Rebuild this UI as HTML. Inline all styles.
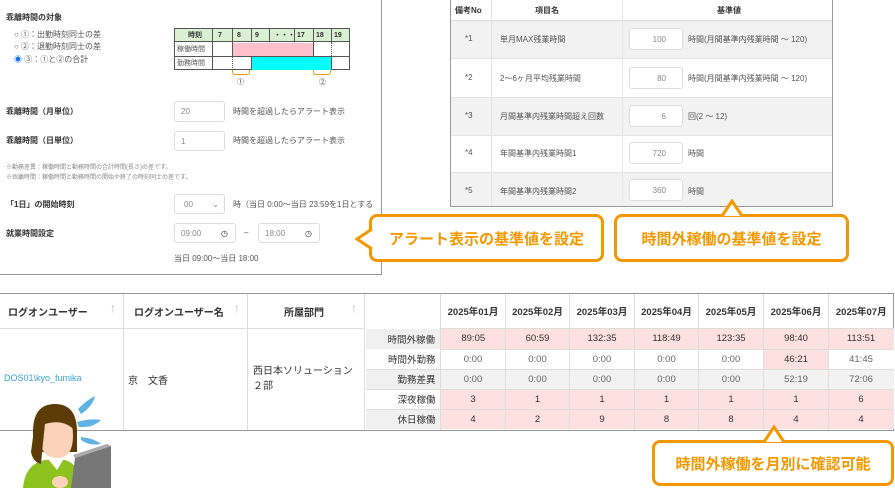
<!DOCTYPE html>
<html><head><meta charset="utf-8"><style>
*{margin:0;padding:0;box-sizing:border-box}
body{width:895px;height:488px;background:#fff;position:relative;overflow:hidden;font-family:"Liberation Sans","Noto Sans CJK JP",sans-serif;color:#333}
.a{position:absolute;white-space:nowrap}
.inp{position:absolute;border:1px solid #ddd;border-radius:3px;background:#fff;font-size:8px;color:#888;padding-left:6px;display:flex;align-items:center}
.s8{font-size:8px}
.b{font-weight:bold}
.call{position:absolute;border:3px solid #f39800;border-radius:8px;background:#fff;color:#f39800;font-weight:bold;font-size:15px;display:flex;align-items:center;justify-content:center}
table{border-collapse:collapse}
</style></head><body>

<!-- Left panel -->
<div class="a" style="left:0;top:0;width:382px;height:275px;border:1px solid #999;border-top:none;border-left:none"></div>
<div class="a s8 b" style="left:6px;top:12px">乖離時間の対象</div>
<div class="a s8" style="left:14px;top:29px;color:#555">○ ①：出勤時刻同士の差</div>
<div class="a s8" style="left:14px;top:41px;color:#555">○ ②：退勤時刻同士の差</div>
<div class="a s8" style="left:14px;top:54px;color:#555"><span style="color:#1a73e8">◉</span> ③：①と②の合計</div>

<div class="a" style="left:174px;top:28px;width:176px;height:42px;border:1px solid #555"></div>
<div class="a" style="left:175px;top:29px;width:174px;height:13px;background:#d9f0d3;border-bottom:1px solid #555"></div>
<div class="a" style="left:232px;top:43px;width:81px;height:13px;background:#ffc0cb"></div>
<div class="a" style="left:251px;top:57px;width:80px;height:13px;background:#00ffff"></div>
<div class="a" style="left:175px;top:56px;width:174px;border-top:1px solid #555"></div>
<div class="a" style="left:212px;top:28px;height:42px;border-left:1px solid #555"></div>
<div class="a" style="left:232px;top:28px;height:14px;border-left:1px solid #555"></div>
<div class="a" style="left:232px;top:42px;height:14px;border-left:1px solid #555"></div>
<div class="a" style="left:232px;top:56px;height:14px;border-left:1px dotted #555"></div>
<div class="a" style="left:251px;top:28px;height:14px;border-left:1px solid #555"></div>
<div class="a" style="left:251px;top:56px;height:14px;border-left:1px solid #555"></div>
<div class="a" style="left:269px;top:28px;height:14px;border-left:1px solid #555"></div>
<div class="a" style="left:294px;top:28px;height:14px;border-left:1px solid #555"></div>
<div class="a" style="left:313px;top:28px;height:28px;border-left:1px solid #555"></div>
<div class="a" style="left:331px;top:28px;height:14px;border-left:1px solid #555"></div>
<div class="a" style="left:331px;top:42px;height:14px;border-left:1px dotted #555"></div>
<div class="a" style="left:331px;top:56px;height:14px;border-left:1px solid #555"></div>
<div class="a" style="left:175px;top:29px;font-size:7px;font-weight:bold;line-height:13px;width:174px;height:13px">
<span class="a" style="left:13px">時刻</span><span class="a" style="left:43px">7</span><span class="a" style="left:62px">8</span><span class="a" style="left:80px">9</span><span class="a" style="left:99px">・・・</span><span class="a" style="left:122px">17</span><span class="a" style="left:141px">18</span><span class="a" style="left:159px">19</span></div>
<div class="a" style="left:177px;top:43px;font-size:7px;color:#555;line-height:13px">稼働時間</div>
<div class="a" style="left:177px;top:57px;font-size:7px;color:#555;line-height:13px">勤務時間</div>
<div class="a" style="left:232px;top:70px;width:18px;height:5px;border:1px solid #f39800;border-top:none;border-radius:0 0 3px 3px"></div>
<div class="a" style="left:313px;top:70px;width:18px;height:5px;border:1px solid #f39800;border-top:none;border-radius:0 0 3px 3px"></div>
<div class="a" style="left:237px;top:77px;font-size:7px">①</div>
<div class="a" style="left:319px;top:77px;font-size:7px">②</div>

<div class="a s8 b" style="left:6px;top:106px">乖離時間（月単位）</div>
<div class="inp" style="left:174px;top:101px;width:51px;height:21px">20</div>
<div class="a s8" style="left:233px;top:106px;color:#555">時間を超過したらアラート表示</div>
<div class="a s8 b" style="left:6px;top:135px">乖離時間（日単位）</div>
<div class="inp" style="left:174px;top:131px;width:51px;height:20px">1</div>
<div class="a s8" style="left:233px;top:135px;color:#555">時間を超過したらアラート表示</div>
<div class="a" style="left:6px;top:162px;font-size:6px;color:#888">※勤務差異：稼働時間と勤務時間の合計時間(長さ)の差です。</div>
<div class="a" style="left:6px;top:172px;font-size:6px;color:#888">※乖離時間：稼働時間と勤務時間の開始や終了の時刻同士の差です。</div>
<div class="a s8 b" style="left:6px;top:199px">「1日」の開始時刻</div>
<div class="inp" style="left:174px;top:194px;width:51px;height:20px;padding-left:9px">00<span style="position:absolute;right:5px">⌄</span></div>
<div class="a s8" style="left:233px;top:199px;color:#555">時（当日 0:00～当日 23:59を1日とする</div>
<div class="a s8 b" style="left:6px;top:228px">就業時間設定</div>
<div class="inp" style="left:174px;top:223px;width:62px;height:20px">09:00<span style="position:absolute;right:7px;color:#333">◷</span></div>
<div class="a s8" style="left:244px;top:228px;color:#555">–</div>
<div class="inp" style="left:258px;top:223px;width:62px;height:20px">18:00<span style="position:absolute;right:7px;color:#333">◷</span></div>
<div class="a s8" style="left:174px;top:253px;color:#555">当日 09:00～当日 18:00</div>

<!-- Right top table -->
<div class="a" style="left:450px;top:0;width:383px;height:207px;border:1px solid #999;border-top:none;background:#fff;font-size:8px;color:#555">
<div class="a" style="left:0;top:20px;width:381px;height:38px;background:#f2f2f2"></div>
<div class="a" style="left:0;top:97px;width:381px;height:38px;background:#f2f2f2"></div>
<div class="a" style="left:0;top:172px;width:381px;height:34px;background:#f2f2f2"></div>
<div class="a" style="left:0;top:20px;width:381px;border-top:1px solid #ddd"></div>
<div class="a" style="left:0;top:58px;width:381px;border-top:1px solid #e4e4e4"></div>
<div class="a" style="left:0;top:97px;width:381px;border-top:1px solid #e4e4e4"></div>
<div class="a" style="left:0;top:135px;width:381px;border-top:1px solid #e4e4e4"></div>
<div class="a" style="left:0;top:172px;width:381px;border-top:1px solid #e4e4e4"></div>
<div class="a" style="left:40px;top:0;height:206px;border-left:1px solid #e4e4e4"></div>
<div class="a" style="left:171px;top:0;height:206px;border-left:1px solid #e4e4e4"></div>
<div class="a b" style="left:4px;top:5px;color:#333">備考No</div>
<div class="a b" style="left:84px;top:5px;color:#333">項目名</div>
<div class="a b" style="left:266px;top:5px;color:#333">基準値</div>
<div class="a" style="left:14px;top:34px">*1</div><div class="a" style="left:49px;top:34px">単月MAX残業時間</div>
<div class="a" style="left:14px;top:73px">*2</div><div class="a" style="left:49px;top:73px">2～6ヶ月平均残業時間</div>
<div class="a" style="left:14px;top:111px">*3</div><div class="a" style="left:49px;top:111px">月間基準内残業時間超え回数</div>
<div class="a" style="left:14px;top:148px">*4</div><div class="a" style="left:49px;top:148px">年間基準内残業時間1</div>
<div class="a" style="left:14px;top:186px">*5</div><div class="a" style="left:49px;top:186px">年間基準内残業時間2</div>
<div class="inp" style="left:178px;top:28px;width:54px;height:22px;justify-content:flex-end;padding-right:16px">100</div>
<div class="inp" style="left:178px;top:67px;width:54px;height:22px;justify-content:flex-end;padding-right:16px">80</div>
<div class="inp" style="left:178px;top:105px;width:54px;height:22px;justify-content:flex-end;padding-right:16px">6</div>
<div class="inp" style="left:178px;top:142px;width:54px;height:22px;justify-content:flex-end;padding-right:16px">720</div>
<div class="inp" style="left:178px;top:179px;width:54px;height:22px;justify-content:flex-end;padding-right:16px">360</div>
<div class="a" style="left:237px;top:34px">時間(月間基準内残業時間 ～ 120)</div>
<div class="a" style="left:237px;top:73px">時間(月間基準内残業時間 ～ 120)</div>
<div class="a" style="left:237px;top:111px">回(2 ～ 12)</div>
<div class="a" style="left:237px;top:148px">時間</div>
<div class="a" style="left:237px;top:186px">時間</div>
</div>

<!-- callouts -->
<div class="call" style="left:369px;top:214px;width:235px;height:48px">アラート表示の基準値を設定</div>
<svg class="a" style="left:355px;top:228px" width="18" height="22"><path d="M17 1 L2 11 L17 21" fill="#fff" stroke="#f39800" stroke-width="3"/></svg>
<div class="call" style="left:614px;top:214px;width:235px;height:48px">時間外稼働の基準値を設定</div>
<svg class="a" style="left:721px;top:199px" width="22" height="18"><path d="M1 17 L11 2 L21 17" fill="#fff" stroke="#f39800" stroke-width="3"/></svg>

<!-- bottom table -->
<div class="a" style="left:0;top:293px;width:895px;height:138px;border:1px solid #999;border-left:none;border-right:1px solid #999;width:894px"></div>
<div class="a" style="left:0;top:328px;width:364px;border-top:1px solid #ddd"></div>
<div class="a" style="left:123px;top:294px;height:136px;border-left:1px solid #ddd"></div>
<div class="a" style="left:247px;top:294px;height:136px;border-left:1px solid #ddd"></div>
<div class="a" style="left:364px;top:294px;height:136px;border-left:1px solid #ddd"></div>
<div class="a b" style="left:8px;top:304px;font-size:10px">ログオンユーザー</div>
<div class="a" style="left:110px;top:301px;font-size:12px;color:#bbb">↑</div>
<div class="a b" style="left:134px;top:304px;font-size:10px">ログオンユーザー名</div>
<div class="a" style="left:234px;top:301px;font-size:12px;color:#bbb">↑</div>
<div class="a b" style="left:284px;top:304px;font-size:10px">所屋部門</div>
<div class="a" style="left:351px;top:301px;font-size:12px;color:#bbb">↑</div>
<div class="a" style="left:4px;top:373px;font-size:9px;color:#3aa0d8">DOS01\kyo_fumika</div>
<div class="a" style="left:128px;top:372px;font-size:10px">京　文香</div>
<div class="a" style="left:253px;top:364px;font-size:10px;line-height:15px">西日本ソリューション<br>２部</div>

<div class="a" style="left:365px;top:294px">
<table style="font-size:9.5px;color:#333;text-align:center">
<tr style="height:34px"><td style="width:75px;border-right:1px solid #ddd"></td>
<td style="width:65px;border-right:1px solid #ddd;font-weight:bold">2025年01月</td><td style="width:64px;border-right:1px solid #ddd;font-weight:bold">2025年02月</td><td style="width:65px;border-right:1px solid #ddd;font-weight:bold">2025年03月</td><td style="width:64px;border-right:1px solid #ddd;font-weight:bold">2025年04月</td><td style="width:65px;border-right:1px solid #ddd;font-weight:bold">2025年05月</td><td style="width:65px;border-right:1px solid #ddd;font-weight:bold">2025年06月</td><td style="width:65px;font-weight:bold">2025年07月</td></tr>
<tr style="height:21px;background:#fde0e0;border-top:1px solid #ddd"><td style="background:#f0f0f0;text-align:right;padding-right:5px;border:1px solid #fff">時間外稼働</td><td>89:05</td><td>60:59</td><td>132:35</td><td>118:49</td><td>123:35</td><td>98:40</td><td>113:51</td></tr>
<tr style="height:20px;background:#fff;color:#666;border-top:1px solid #ddd"><td style="text-align:right;padding-right:5px;color:#333">時間外勤務</td><td>0:00</td><td>0:00</td><td>0:00</td><td>0:00</td><td>0:00</td><td style="background:#fde0e0;color:#333">46:21</td><td>41:45</td></tr>
<tr style="height:20px;background:#f2f2f2;color:#666;border-top:1px solid #ddd"><td style="background:#f0f0f0;text-align:right;padding-right:5px;color:#333">勤務差異</td><td>0:00</td><td>0:00</td><td>0:00</td><td>0:00</td><td>0:00</td><td>52:19</td><td>72:06</td></tr>
<tr style="height:20px;background:#fde0e0;border-top:1px solid #ddd"><td style="background:#fff;text-align:right;padding-right:5px">深夜稼働</td><td>3</td><td>1</td><td>1</td><td>1</td><td>1</td><td>1</td><td>6</td></tr>
<tr style="height:20px;background:#fde0e0;border-top:1px solid #ddd"><td style="background:#f0f0f0;text-align:right;padding-right:5px">休日稼働</td><td>4</td><td>2</td><td>9</td><td>8</td><td>8</td><td>4</td><td>4</td></tr>
</table></div>
<div class="a" style="left:440px;top:328px;height:102px;border-left:1px solid #ddd"></div>
<div class="a" style="left:505px;top:328px;height:102px;border-left:1px solid #ddd"></div>
<div class="a" style="left:569px;top:328px;height:102px;border-left:1px solid #ddd"></div>
<div class="a" style="left:634px;top:328px;height:102px;border-left:1px solid #ddd"></div>
<div class="a" style="left:698px;top:328px;height:102px;border-left:1px solid #ddd"></div>
<div class="a" style="left:763px;top:328px;height:102px;border-left:1px solid #ddd"></div>
<div class="a" style="left:828px;top:328px;height:102px;border-left:1px solid #ddd"></div>

<div class="call" style="left:652px;top:440px;width:242px;height:46px">時間外稼働を月別に確認可能</div>
<svg class="a" style="left:763px;top:425px" width="22" height="18"><path d="M1 17 L11 2 L21 17" fill="#fff" stroke="#f39800" stroke-width="3"/></svg>

<!-- person -->
<svg class="a" style="left:15px;top:392px" width="100" height="96" viewBox="0 0 100 96">
<path d="M63 17 Q72 8 80 4 Q78 14 66 22Z" fill="#5fb3e4"/>
<path d="M62 30 Q75 26 86 28 Q78 36 64 35Z" fill="#5fb3e4"/>
<path d="M66 45 Q78 46 86 52 Q74 54 66 48Z" fill="#5fb3e4"/>
<path d="M8 96 Q10 72 30 68 L50 68 Q65 72 66 96Z" fill="#8dc21f"/>
<path d="M34 68 L42 78 L48 68Z" fill="#fff"/>
<path d="M18 40 Q18 12 40 12 Q62 12 62 40 L62 60 L18 60Z" fill="#5c3b06"/>
<path d="M25 44 Q26 20 42 24 Q58 20 58 44 Q58 66 42 66 Q25 66 25 44Z" fill="#fad3b8"/>
<path d="M20 30 Q30 10 48 16 Q60 20 61 40 Q50 26 30 32 Q28 50 26 72 Q18 70 16 60Z" fill="#5c3b06"/>
<path d="M60 66 L96 54 L96 96 L56 96Z" fill="#777"/>
<path d="M60 66 L96 54 L92 52 L58 63Z" fill="#aaa"/>
<ellipse cx="45" cy="90" rx="8" ry="6" fill="#fad3b8"/>
</svg>
</body></html>
